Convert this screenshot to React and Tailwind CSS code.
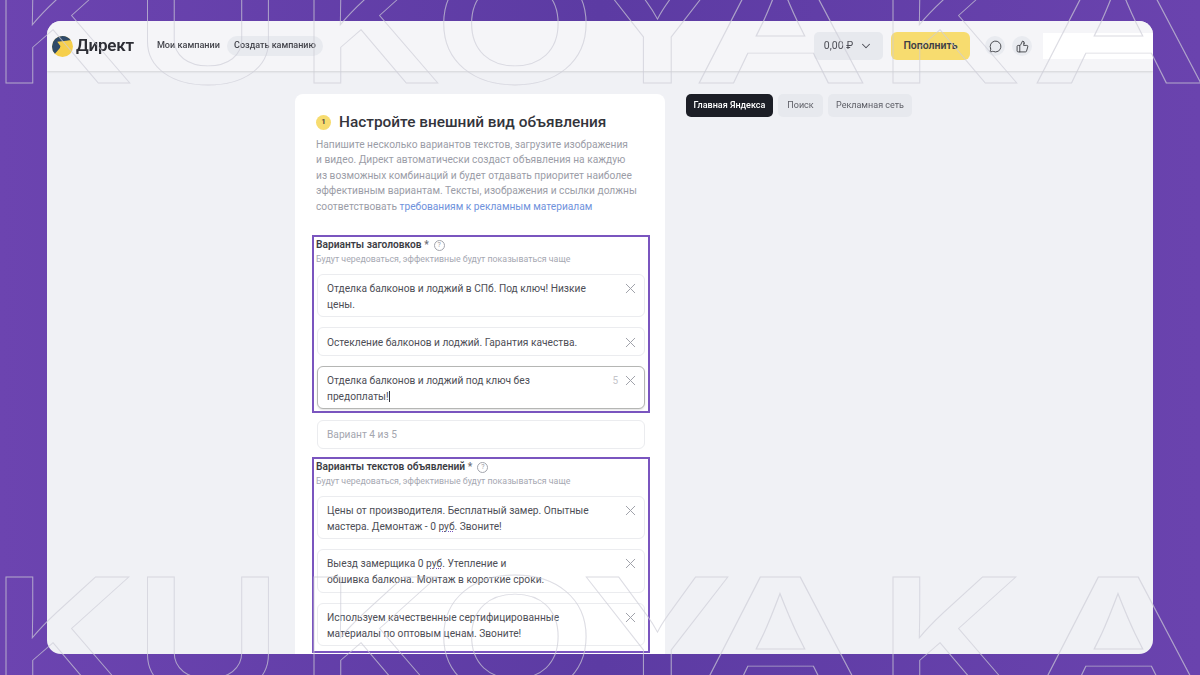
import React from "react";
import { X, ChevronDown, MessageCircle, ThumbsUp } from "lucide-react";

const font = "font-['Roboto','Noto_Sans',sans-serif]";

// decorative outlined word over the window
const letters = [
  { ch: "K", cls: "left-[63px] scale-x-[1.25]" },
  { ch: "U", cls: "left-[208px] scale-x-[1.25]" },
  { ch: "K", cls: "left-[371px] scale-x-[1.25]" },
  { ch: "O", cls: "left-[515px] scale-x-[1.3]" },
  { ch: "Y", cls: "left-[657px] scale-x-[1.3]" },
  { ch: "A", cls: "left-[781px] scale-x-[1.47]" },
  { ch: "K", cls: "left-[950px] scale-x-[1.25]" },
  { ch: "A", cls: "left-[1119px] scale-x-[1.47]" },
];

const OutlineWord = ({ className }) => (
  <div className={`absolute left-0 w-[1200px] h-[119px] pointer-events-none z-20 ${className}`}>
    {letters.map((l, i) => (
      <span
        key={i}
        className={`absolute top-0 -translate-x-1/2 font-['Inter',sans-serif] font-semibold text-[164px] leading-[119px] text-transparent [-webkit-text-stroke:0.8px_rgba(205,205,215,0.7)] ${l.cls}`}
      >
        {l.ch}
      </span>
    ))}
  </div>
);

const Logo = () => (
  <svg width="21" height="21" viewBox="0 0 20 20">
    <circle cx="10" cy="10" r="10" fill="#f6cf4c" />
    <path d="M10 0A10 10 0 0 0 0 10 10 10 0 0 0 2.8 17L8 11 12 5 18 4.2A10 10 0 0 0 10 0Z" fill="#2f4a68" />
    <path d="M5 5.5L18 4 13.5 14.5 11 11 6 19 8 9.5Z" fill="#f6cf4c" />
  </svg>
);

const Field = ({ lines, h, active, count }) => (
  <div className={`mx-[3px] flex items-start justify-between rounded-[6px] bg-white pl-[9px] pr-[5px] border ${lines.length === 1 ? "pt-[6px]" : "pt-[5px]"} ${h} ${active ? "border-[#b5b6b4] shadow-[0_1px_2px_rgba(0,0,0,0.12)]" : "border-[#ebecef]"}`}>
    <div className="text-[10.2px] leading-[15.5px] text-[#4d4e56] whitespace-nowrap pt-[1px]">
      {lines.map((line, i) => (
        <div key={i}>{line}</div>
      ))}
    </div>
    <div className="flex items-center gap-[4px]">
      {count && <span className="text-[10px] leading-[13px] text-[#c4c5ca]">{count}</span>}
      <X size={17} strokeWidth={1.4} className="text-[#9fa1a9]" />
    </div>
  </div>
);

const Label = ({ title }) => (
  <div className="pl-[2px]">
    <div className="flex items-center h-[14px] text-[10.2px] font-semibold text-[#3c3d44]">
      {title}&nbsp;<span className="text-[#6d6e76]">*</span>
      <span className="ml-[5px] flex h-[11px] w-[11px] items-center justify-center rounded-full border border-[#a3a5ad] text-[7px] font-normal text-[#9a9ca4]">?</span>
    </div>
    <div className="mt-[1px] h-[12px] text-[8.8px] leading-[12px] text-[#a6a8b2] whitespace-nowrap">
      Будут чередоваться, эффективные будут показываться чаще
    </div>
  </div>
);

export default function App() {
  return (
    <div className={`relative h-[675px] w-[1200px] overflow-hidden bg-[linear-gradient(90deg,#6c44b0,#5c3ba3_50%,#6a43ae)] pl-[47px] pt-[21px] ${font}`}>
      <div className="flex h-[633px] w-[1106px] flex-col overflow-hidden rounded-[14px] bg-[#f0f1f5] blur-[0.35px]">
        {/* шапка */}
        <header className="flex h-[50px] shrink-0 items-center bg-[#f5f5f8] pl-[5px] shadow-[0_1px_2px_rgba(0,0,0,0.12)]">
          <Logo />
          <span className="ml-[3px] text-[17px] font-semibold tracking-[-0.2px] text-[#2d2e35]">Директ</span>
          <span className="ml-[23px] text-[9.1px] font-medium text-[#44454c]">Мои кампании</span>
          <span className="ml-[7px] flex h-[20px] w-[96px] items-center justify-center rounded-full bg-[#e8eaef] text-[9px] font-medium text-[#44454c]">Создать кампанию</span>
          <div className="ml-auto flex items-center">
            <div className="flex h-[28px] w-[69px] items-center justify-center gap-[6px] rounded-[5px] bg-[#e7e9ee] text-[10.5px] text-[#4d4e56]">
              0,00 ₽ <ChevronDown size={14} strokeWidth={1.8} />
            </div>
            <div className="ml-[8px] flex h-[28px] w-[79px] items-center justify-center rounded-[6px] bg-[#f7dc6f] text-[10.5px] font-semibold text-[#3f4046]">Пополнить</div>
            <div className="ml-[15px] flex h-[20px] w-[20px] items-center justify-center rounded-full bg-[#e9ebf0] text-[#3f4046]">
              <MessageCircle size={13} strokeWidth={1.7} />
            </div>
            <div className="ml-[7px] flex h-[20px] w-[20px] items-center justify-center rounded-full bg-[#e9ebf0] text-[#3f4046]">
              <ThumbsUp size={13} strokeWidth={1.7} />
            </div>
            <div className="ml-[11px] h-[26px] w-[110px] bg-white" />
          </div>
        </header>

        <main className="flex min-h-0 flex-1 gap-[21px] pl-[248px] pt-[23px]">
          <section className="w-[370px] overflow-hidden rounded-t-[8px] bg-white pl-[17px] pr-[15px] pt-[20px]">
            <div className="flex h-[16px] items-center pl-[4px]">
              <span className="flex h-[15px] w-[15px] items-center justify-center rounded-full bg-[#f7dc6f] text-[8px] font-semibold text-[#3f4046]">1</span>
              <h1 className="ml-[8px] text-[15.4px] font-medium leading-[16px] text-[#33343b] whitespace-nowrap">Настройте внешний вид объявления</h1>
            </div>
            <p className="mt-[7px] pl-[4px] text-[10.2px] leading-[15.4px] text-[#9b9da7] whitespace-nowrap">
              Напишите несколько вариантов текстов, загрузите изображения<br />
              и видео. Директ автоматически создаст объявления на каждую<br />
              из возможных комбинаций и будет отдавать приоритет наиболее<br />
              эффективным вариантам. Тексты, изображения и ссылки должны<br />
              соответствовать <span className="text-[#6f92dc]">требованиям к рекламным материалам</span>
            </p>

            <div className="mt-[21px] h-[178px] border-2 border-[#7a55bf] pt-[1px]">
              <Label title="Варианты заголовков" />
              <div className="mt-[9px] flex flex-col gap-[10px]">
                <Field h="h-[43px]" lines={["Отделка балконов и лоджий в СПб. Под ключ! Низкие", "цены."]} />
                <Field h="h-[29px]" lines={["Остекление балконов и лоджий. Гарантия качества."]} />
                <Field h="h-[43px]" active count="5" lines={["Отделка балконов и лоджий под ключ без", <>предоплаты!<span className="border-r border-[#33343b]" /></>]} />
              </div>
            </div>

            <div className="ml-[5px] mr-[5px] mt-[7px] flex h-[29px] items-center rounded-[6px] border border-[#ebecef] pl-[9px] pt-[1px] text-[10.2px] text-[#a4a6af]">Вариант 4 из 5</div>

            <div className="mt-[8px] h-[196px] border-2 border-[#7a55bf] pt-[1px]">
              <Label title="Варианты текстов объявлений" />
              <div className="mt-[9px] flex flex-col gap-[10px]">
                <Field h="h-[43px]" lines={["Цены от производителя. Бесплатный замер. Опытные", <>мастера. Демонтаж - 0 <span className="underline decoration-dotted decoration-[#7a55bf]">руб</span>. Звоните!</>]} />
                <Field h="h-[44px]" lines={[<>Выезд замерщика 0 <span className="underline decoration-dotted decoration-[#7a55bf]">руб</span>. Утепление и</>, "обшивка балкона. Монтаж в короткие сроки."]} />
                <Field h="h-[43px]" lines={["Используем качественные сертифицированные", "материалы по оптовым ценам. Звоните!"]} />
              </div>
            </div>
          </section>

          <nav className="flex h-[23px] gap-[5px] text-[9px]">
            <span className="flex w-[87px] items-center justify-center rounded-[5px] bg-[#1c1e26] font-medium text-white">Главная Яндекса</span>
            <span className="flex w-[45px] items-center justify-center rounded-[5px] bg-[#e7e9ee] text-[#5c5d65]">Поиск</span>
            <span className="flex w-[84px] items-center justify-center rounded-[5px] bg-[#e7e9ee] text-[#5c5d65]">Рекламная сеть</span>
          </nav>
        </main>
      </div>

      <OutlineWord className="top-[-36px]" />
      <OutlineWord className="top-[577px]" />
    </div>
  );
}
